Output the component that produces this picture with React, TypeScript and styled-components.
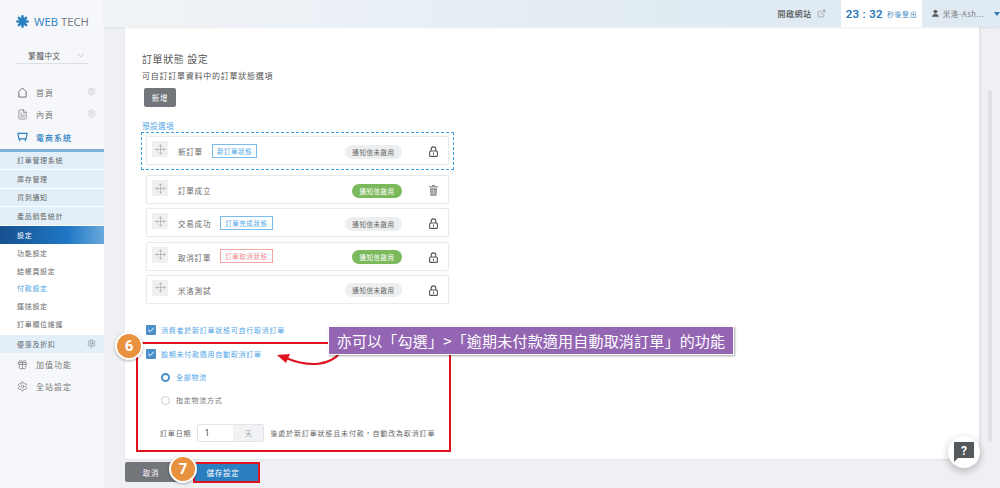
import React from "react";
import styled, { createGlobalStyle } from "styled-components";
import { FileText, Gift, Settings, Move, ExternalLink, User, Check } from "lucide-react";

const Global = createGlobalStyle`
  html, body { margin: 0; padding: 0; height: 100%; overflow: hidden; }
  body { font-family: "Noto Sans CJK TC", "Noto Sans", sans-serif; background: #eef0f4; color: #666; }
  * { box-sizing: border-box; }
`;
const Page = styled.div`display: flex; width: 1000px; height: 488px; overflow: hidden;`;
const Sidebar = styled.aside`width: 104px; flex: none; background: #f6f7fa; display: flex; flex-direction: column;`;
const Logo = styled.div`display: flex; align-items: center; gap: 5px; height: 42px; padding: 0 0 0 16px; font: 400 11.3px "Open Sans", sans-serif; color: #6f7780; white-space: nowrap;`;
const LogoBlue = styled.span`color: #2a7fc0;`;
const Lang = styled.div`margin: 5px 16px 0; height: 17px; padding-left: 8px; border-bottom: 1px solid #dcdee2; display: flex; justify-content: center; align-items: center; gap: 16px; font-size: 7.5px; letter-spacing: .6px; color: #555;`;
const Chevron = styled.svg`width: 7px; height: 5px; fill: none; stroke: #c4c6cb; stroke-width: 1;`;
const MainNav = styled.nav`margin-top: 17px; display: flex; flex-direction: column;`;
const NavItem = styled.div<{ $active?: boolean }>`height: 22.5px; padding: 0 8px 0 17px; display: flex; align-items: center; gap: 8px; font-size: 8px; letter-spacing: 1px; color: ${p => p.$active ? "#2a7fc0" : "#777"}; font-weight: ${p => p.$active ? 500 : 400};
  & > svg:first-child { width: 11px; height: 11px; flex: none; color: ${p => p.$active ? "#2a7fc0" : "#666"}; }`;
const Cog = styled.div`margin-left: auto; margin-top: -2px; line-height: 0; color: #bbb;`;
const SubGroup = styled.div`border-top: 3px solid #7cb2da; display: flex; flex-direction: column;`;
const SubBlue = styled.div`height: 18.6px; padding-left: 17px; display: flex; align-items: center; background: #e2eff8; border-bottom: 1.5px solid #fff; font-size: 7px; letter-spacing: .7px; color: #666;`;
const SubActive = styled(SubBlue)`height: 18px; border-bottom: none; color: #fff; background: linear-gradient(90deg, #17508f, #1f78c5 65%, #6aa9dd);`;
const SubWhite = styled.div`background: #fff; padding: 0 0 2px; display: flex; flex-direction: column;`;
const SubLink = styled.div<{ $on?: boolean }>`height: 17.8px; padding-left: 17px; display: flex; align-items: center; font-size: 7px; letter-spacing: .7px; color: ${p => p.$on ? "#4a9fe0" : "#666"};`;
const SubBar = styled.div`height: 18px; padding: 0 8px 0 17px; display: flex; align-items: center; justify-content: space-between; background: #e2eff8; font-size: 7px; letter-spacing: .7px; color: #666;`;
const BottomNav = styled.div`display: flex; flex-direction: column;`;
const Right = styled.div`flex: 1; display: flex; flex-direction: column; min-width: 0;`;
const Header = styled.header`height: 27px; flex: none; display: flex; justify-content: flex-end; background: linear-gradient(90deg, #f1f4f7, #dfeaf2 70%); box-shadow: 0 1px 2px rgba(0,0,0,.08); position: relative; z-index: 1;`;
const SiteLink = styled.div`width: 81px; padding-left: 2px; display: flex; align-items: center; justify-content: center; gap: 5px; font-size: 8px; letter-spacing: .5px; color: #555; font-weight: 500; svg { width: 9px; height: 9px; color: #777; }`;
const Timer = styled.div`width: 81px; background: #fff; display: flex; align-items: center; justify-content: center; gap: 4px; color: #4a8cc0; font-size: 7px; letter-spacing: .6px; white-space: nowrap;`;
const Clock = styled.b`font: 600 11.5px Roboto, sans-serif; letter-spacing: .3px; color: #2a78b8;`;
const UserBox = styled.div`width: 78px; padding-left: 9px; display: flex; align-items: center; gap: 3px; font-size: 7.5px; letter-spacing: .5px; color: #777; white-space: nowrap; svg { width: 9px; height: 9px; color: #555; fill: #555; }`;
const Caret = styled.span`margin-left: 7px; border: 3px solid transparent; border-top: 4px solid #2a78b8; border-bottom: 0;`;
const Content = styled.main`flex: 1; position: relative; padding: 0 21px; display: flex; flex-direction: column;`;
const Card = styled.section`height: 432px; background: #fff; padding: 25px 17px 0; display: flex; flex-direction: column; box-shadow: 1px 0 3px rgba(0,0,0,.1);`;
const Title = styled.h2`margin: 0; font-size: 10px; line-height: 13px; font-weight: 400; letter-spacing: .6px; color: #555;`;
const Desc = styled.p`margin: 5px 0 0; font-size: 8px; line-height: 11px; letter-spacing: .75px; color: #555;`;
const AddBtn = styled.button`margin: 7px 0 0 2px; width: 32px; height: 19px; border: 0; border-radius: 2px; background: #72757a; color: #fff; font: 7.5px "Noto Sans CJK TC", sans-serif; letter-spacing: .7px; padding: 0;`;
const GroupLabel = styled.div`margin-top: 13px; font-size: 7.5px; line-height: 11px; letter-spacing: .5px; color: #55a8e8;`;
const Dashed = styled.div`margin: 1px 0 0 -1px; width: 313px; height: 38px; padding: 3px 4px; border: 1.5px dashed #3fa0e6;`;
const Rows = styled.div`margin: 5px 0 0 4px; width: 303px; display: flex; flex-direction: column; gap: 4.3px;`;
const Row = styled.div`height: 29px; background: #fff; border: 1px solid #e9eaec; border-radius: 2px; box-shadow: 0 0 2px rgba(0,0,0,.05); display: flex; align-items: center; padding: 2px 10px 0 5px; font-size: 7.5px; letter-spacing: .8px; color: #666;`;
const Handle = styled.div`width: 16px; height: 16px; margin: -5px 10px 0 0; background: #eef0f2; display: flex; align-items: center; justify-content: center; svg { width: 11px; height: 11px; color: #999; }`;
const RowName = styled.span`margin-right: 9px; white-space: nowrap;`;
const Tag = styled.span<{ $c: string }>`height: 14px; margin-top: -2px; padding: 0 4px; display: flex; align-items: center; border: 1px solid ${p => p.$c === "red" ? "#f6a5a5" : "#79bdf0"}; color: ${p => p.$c === "red" ? "#f08a8a" : "#4fa8ea"}; font-size: 6.5px; letter-spacing: .55px; white-space: nowrap;`;
const Pill = styled.span<{ $on?: boolean }>`margin-left: auto; margin-right: 27px; width: ${p => p.$on ? 50 : 57}px; height: 14px; border-radius: 7px; display: flex; align-items: center; justify-content: center; font-size: 6.5px; letter-spacing: .55px; background: ${p => p.$on ? "#7cb95c" : "#eceef0"}; color: ${p => p.$on ? "#fff" : "#666"};`;
const End = styled.svg`width: 9px; height: 11px; flex: none;`;
const Options = styled.div`margin-top: 14.5px; margin-left: 4px; display: flex; flex-direction: column;`;
const CheckRow = styled.div`height: 24px; display: flex; align-items: center; gap: 5px; font-size: 7px; letter-spacing: .75px; color: #4fa5e8;`;
const Box = styled.span`width: 10px; height: 10px; background: #4d8fc8; border-radius: 1px; display: flex; align-items: center; justify-content: center; svg { width: 8px; height: 8px; color: #fff; stroke-width: 3; }`;
const Radios = styled.div`margin: 6px 0 0 15px; display: flex; flex-direction: column; gap: 13px;`;
const RadioRow = styled.div<{ $on?: boolean }>`height: 10px; display: flex; align-items: center; gap: 6px; font-size: 7px; letter-spacing: .75px; color: ${p => p.$on ? "#4fa5e8" : "#777"};`;
const Radio = styled.span<{ $on?: boolean }>`width: 9px; height: 9px; border-radius: 50%; background: #fff; border: ${p => p.$on ? "2.5px solid #4d8fc8" : "1px solid #ccc"};`;
const DateRow = styled.div`margin: 19px 0 0 14px; display: flex; align-items: center; font-size: 7px; letter-spacing: .85px; color: #666; white-space: nowrap;`;
const InputWrap = styled.div`margin: 0 6px 0 6px; width: 67px; height: 18px; display: flex; border: 1px solid #e2e4e7; border-radius: 2px; font: 9px Roboto, sans-serif; letter-spacing: 0;`;
const InputVal = styled.span`flex: 1; display: flex; align-items: center; padding-left: 6px; color: #555;`;
const Unit = styled.span`width: 30px; background: #f0f2f4; color: #aaa; display: flex; align-items: center; justify-content: center; font: 7px "Noto Sans CJK TC", sans-serif;`;
const Actions = styled.div`margin-top: 3px; display: flex; gap: 3px;`;
const Cancel = styled.button`width: 65px; height: 20px; border: 0; border-radius: 2px; padding: 0 13px 0 0; background: #72757a; color: #fff; font: 7.5px "Noto Sans CJK TC", sans-serif; letter-spacing: .8px;`;
const Save = styled.button`width: 67px; height: 21px; border: 2px solid #e0121f; background: #2a7fc0; color: #fff; font: 7.5px "Noto Sans CJK TC", sans-serif; letter-spacing: .8px; padding: 0 7px 0 0;`;
const Scroll = styled.div`position: absolute; left: 884px; top: 63px; width: 4px; height: 352px; background: #dfe1e6; border-radius: 2px;`;
const RedBox = styled.div`position: absolute; left: 32px; top: 315px; width: 315px; height: 110px; border: 2px solid #e0121f; pointer-events: none;`;
const Badge = styled.div<{ $x: number; $y: number }>`position: absolute; left: ${p => p.$x}px; top: ${p => p.$y}px; width: 28px; height: 28px; border-radius: 50%; background: #e8913f; border: 2px solid #fff; box-shadow: 0 1px 3px rgba(0,0,0,.3); color: #fff; font: 700 15px Roboto, sans-serif; display: flex; align-items: center; justify-content: center;`;
const Callout = styled.div`position: absolute; left: 224px; top: 299px; width: 406px; height: 29px; background: #9465b3; border: 1px solid #fff; box-shadow: 1px 1px 2px rgba(0,0,0,.35); color: #fff; font-size: 15px; letter-spacing: .2px; display: flex; align-items: center; justify-content: center; white-space: nowrap;`;
const Arrow = styled.svg`position: absolute; left: 170px; top: 320px; width: 70px; height: 30px;`;
const Help = styled.div`position: absolute; left: 844px; top: 409px; width: 32px; height: 32px; border-radius: 50%; background: #fff; box-shadow: 0 3px 8px rgba(0,0,0,.25); display: flex; align-items: center; justify-content: center;`;
const HelpIcon = styled.svg`width: 22px; height: 22px;`;

const Small = () => <Settings size={9} strokeWidth={1.5} />;
const Drag = () => <Handle><Move strokeWidth={1.2} /></Handle>;

const LockIcon = () => (
  <End viewBox="0 0 9 11" fill="none">
    <path d="M2.2 5V3.2a2.3 2.3 0 0 1 4.6 0V5" stroke="#555" strokeWidth="1.1" />
    <rect x=".6" y="5" width="7.8" height="5.4" rx="1" stroke="#555" strokeWidth="1.1" />
    <rect x="4" y="6.6" width="1" height="2.2" fill="#555" />
  </End>
);
const TrashIcon = () => (
  <End viewBox="0 0 9 11" fill="#8a8c90">
    <rect x="0" y="1.2" width="9" height="1.2" />
    <rect x="3" y="0" width="3" height="1.2" />
    <path d="M1 3.2h7l-.5 7.6h-6z" />
    <path d="M3 4.5v5M4.5 4.5v5M6 4.5v5" stroke="#fff" strokeWidth=".5" />
  </End>
);

const RowItem = ({ name, tag, c, on, trash }: { name: string; tag?: string; c?: string; on?: boolean; trash?: boolean }) => (
  <Row>
    <Drag />
    <RowName>{name}</RowName>
    {tag && <Tag $c={c || "blue"}>{tag}</Tag>}
    <Pill $on={on}>{on ? "通知信啟用" : "通知信未啟用"}</Pill>
    {trash ? <TrashIcon /> : <LockIcon />}
  </Row>
);

export default function App() {
  return (
    <Page>
      <Global />
      <Sidebar>
        <Logo>
          <svg width="13" height="13" viewBox="0 0 14 14" stroke="#2a7fc0" strokeWidth="2.8" strokeLinecap="round">
            <path d="M7 1.5v11M1.5 7h11M3.1 3.1l7.8 7.8M10.9 3.1l-7.8 7.8" />
          </svg>
          <span><LogoBlue>WEB</LogoBlue> TECH</span>
        </Logo>
        <Lang>繁體中文<Chevron viewBox="0 0 7 5"><path d="M.5 1l3 3 3-3" /></Chevron></Lang>
        <MainNav>
          <NavItem>
            <svg viewBox="0 0 12 12" fill="none" stroke="currentColor" strokeWidth="1"><path d="M2 11V5l4-4 4 4v6z" /></svg>
            首頁<Cog><Small /></Cog>
          </NavItem>
          <NavItem><FileText strokeWidth={1.3} />內頁<Cog><Small /></Cog></NavItem>
          <NavItem $active>
            <svg viewBox="0 0 12 12" fill="none" stroke="currentColor" strokeWidth="1.2"><path d="M1 1.5h10l-1 6H2zM3 8v2M9 8v2" /></svg>
            電商系統
          </NavItem>
        </MainNav>
        <SubGroup>
          <SubBlue>訂單管理系統</SubBlue>
          <SubBlue>庫存管理</SubBlue>
          <SubBlue>貨到通知</SubBlue>
          <SubBlue>產品銷售統計</SubBlue>
          <SubActive>設定</SubActive>
          <SubWhite>
            <SubLink>功能設定</SubLink>
            <SubLink>結帳頁設定</SubLink>
            <SubLink $on>付款設定</SubLink>
            <SubLink>運送設定</SubLink>
            <SubLink>訂單欄位維護</SubLink>
          </SubWhite>
          <SubBar>優惠及折扣<Small /></SubBar>
        </SubGroup>
        <BottomNav>
          <NavItem><Gift strokeWidth={1.3} />加值功能</NavItem>
          <NavItem><Settings strokeWidth={1.3} />全站設定</NavItem>
        </BottomNav>
      </Sidebar>
      <Right>
        <Header>
          <SiteLink>開啟網站<ExternalLink strokeWidth={1.3} /></SiteLink>
          <Timer><Clock>23 : 32</Clock>秒後登出</Timer>
          <UserBox><User />米洛-Ash...<Caret /></UserBox>
        </Header>
        <Content>
          <Card>
            <Title>訂單狀態 設定</Title>
            <Desc>可自訂訂單資料中的訂單狀態選項</Desc>
            <AddBtn>新增</AddBtn>
            <GroupLabel>預設選項</GroupLabel>
            <Dashed>
              <RowItem name="新訂單" tag="新訂單狀態" />
            </Dashed>
            <Rows>
              <RowItem name="訂單成立" on trash />
              <RowItem name="交易成功" tag="訂單完成狀態" />
              <RowItem name="取消訂單" tag="訂單取消狀態" c="red" on />
              <RowItem name="米洛測試" />
            </Rows>
            <Options>
              <CheckRow><Box><Check /></Box>消費者於新訂單狀態可自行取消訂單</CheckRow>
              <CheckRow><Box><Check /></Box>逾期未付款適用自動取消訂單</CheckRow>
              <Radios>
                <RadioRow $on><Radio $on />全部物流</RadioRow>
                <RadioRow><Radio />指定物流方式</RadioRow>
              </Radios>
              <DateRow>訂單日期<InputWrap><InputVal>1</InputVal><Unit>天</Unit></InputWrap>後處於新訂單狀態且未付款，自動改為取消訂單</DateRow>
            </Options>
          </Card>
          <Actions>
            <Cancel>取消</Cancel>
            <Save>儲存設定</Save>
          </Actions>
          <Scroll />
          <RedBox />
          <Arrow viewBox="0 0 70 30" fill="none">
            <path d="M66 6C56 18 36 21 12 11" stroke="#e0121f" strokeWidth="2" />
            <path d="M3 8l13-1-4 9z" fill="#e0121f" />
          </Arrow>
          <Callout>亦可以「勾選」&gt;「逾期未付款適用自動取消訂單」的功能</Callout>
          <Badge $x={11} $y={305}>6</Badge>
          <Badge $x={65} $y={428}>7</Badge>
          <Help>
            <HelpIcon viewBox="0 0 22 22">
              <path d="M1 1h20v16H5l-4 4z" fill="#55585c" />
              <text x="11" y="13.5" textAnchor="middle" fill="#fff" fontSize="12" fontWeight="700" fontFamily="Roboto, sans-serif">?</text>
            </HelpIcon>
          </Help>
        </Content>
      </Right>
    </Page>
  );
}
